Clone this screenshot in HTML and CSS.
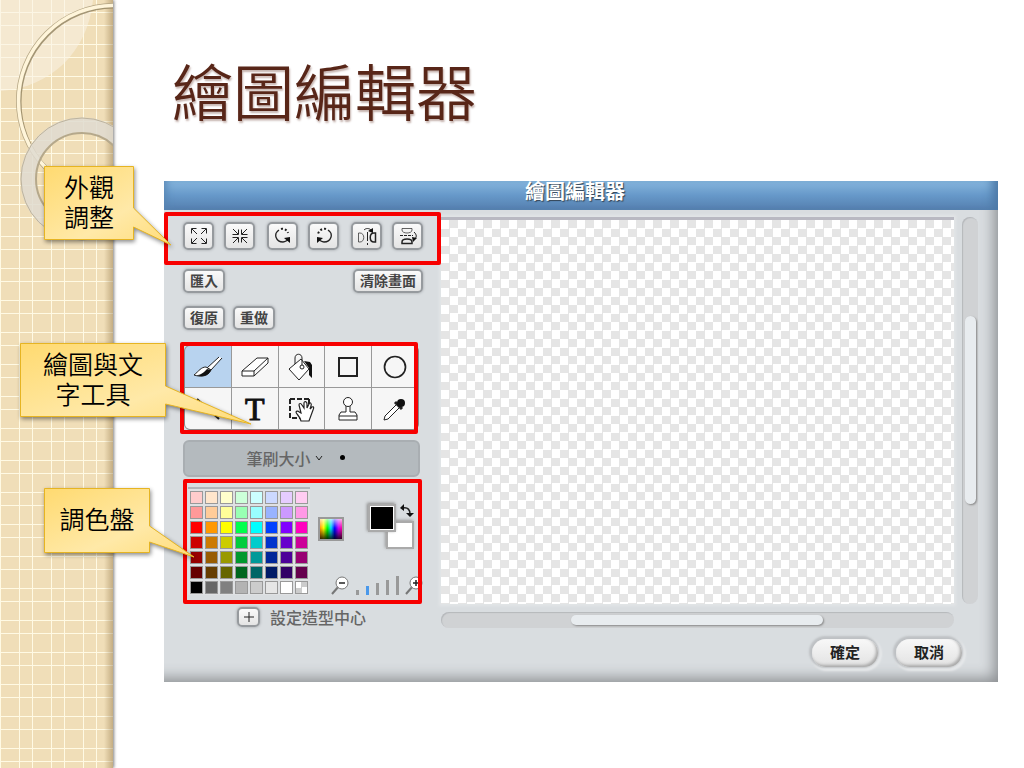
FILE: index.html
```html
<!DOCTYPE html>
<html lang="zh-Hant">
<head>
    <meta charset="UTF-8">
    <meta name="viewport" content="width=device-width, initial-scale=1.0">
    <title>繪圖編輯器</title>
    <link rel="stylesheet" href="styles.css">
</head>
<body>
    <div class="slide">
        <div class="band">
            <svg width="113" height="768" viewBox="0 0 113 768" aria-hidden="true">
                <path d="M0 0H93C88 52 50 88 0 91Z" fill="#faf3e6" fill-opacity="0.55" stroke="none"/>
                <circle cx="114" cy="101" r="95" stroke="#8f7f5c" stroke-opacity="0.8" stroke-width="3" transform="translate(1 1)"/>
                <circle cx="114" cy="101" r="97" stroke="#b3a482" stroke-width="2"/>
                <circle cx="114" cy="101" r="95.5" stroke="#fff5da" stroke-width="3.5"/>
                <circle cx="82" cy="179" r="54" stroke="#dfdbd0" stroke-opacity="0.85" stroke-width="15"/>
                <circle cx="82" cy="179" r="61" stroke="#bdb39d"/>
                <circle cx="82" cy="179" r="46" stroke="#b5a88b" stroke-width="2"/>
            </svg>
        </div>

        <main class="content">
            <h1>繪圖編輯器</h1>

            <section class="editor">
                <h2 class="editor-title">繪圖編輯器</h2>
                <div class="editor-body">
                    <div class="tools">
                        <div class="row transforms">
                            <div class="pair">
                                <button class="btn icon-btn" aria-label="放大">
                                    <svg width="18" height="18" viewBox="0 0 18 18"><path d="M7 7L2 2M1.500 6.500V1.500H6.500M11 7L16 2M11.500 1.500H16.500V6.500M7 11L2 16M1.500 11.500V16.500H6.500M11 11L16 16M16.500 11.500V16.500H11.500"/></svg>
                                </button>
                                <button class="btn icon-btn" aria-label="縮小">
                                    <svg width="18" height="18" viewBox="0 0 18 18"><path d="M2 2L7 7M7.500 2.500V7.500H1.500M16 2L11 7M10.500 2.500V7.500H16.500M2 16L7 11M1.500 10.500H7.500V15.500M16 16L11 11M16.500 10.500H10.500V15.500"/></svg>
                                </button>
                            </div>
                            <div class="pair">
                                <button class="btn icon-btn" aria-label="順時針旋轉">
                                    <svg width="18" height="18" viewBox="0 0 18 18"><path d="M5 3C-1 7 2 15 9 15C11 15 12 14 14 13" stroke-width="1.3"/><path d="M7 2C10 1 13 3 14 6" stroke-width="2" stroke-dasharray="2 2"/><path d="M10 11L16 10V16Z" class="solid"/></svg>
                                </button>
                                <button class="btn icon-btn" aria-label="逆時針旋轉">
                                    <svg width="18" height="18" viewBox="0 0 18 18"><path d="M13 3C19 7 16 15 9 15C7 15 6 14 4 13" stroke-width="1.3"/><path d="M11 2C8 1 4 3 3 7" stroke-width="2" stroke-dasharray="2 2"/><path d="M8 11L2 10V16Z" class="solid"/></svg>
                                </button>
                            </div>
                            <div class="pair">
                                <button class="btn icon-btn" aria-label="水平翻轉">
                                    <svg width="20" height="18" viewBox="0 0 20 18"><path d="M1.500 6H3C8 6 8 15 3 15H1.500Z" opacity=".7"/><path d="M18.500 6H17C12 6 12 15 17 15H18.500Z" stroke-width="1.500"/><path d="M10.500 5V18" stroke-dasharray="9 2"/><path d="M7 3C9 1 12 1 14 3"/><path d="M11 4L16 1V6Z" class="solid"/></svg>
                                </button>
                                <button class="btn icon-btn" aria-label="垂直翻轉">
                                    <svg width="20" height="20" viewBox="0 0 20 20"><path d="M4 2.500H14V4C14 8 4 8 4 4Z" opacity=".7"/><path d="M4 17.500H14V16C14 12 4 12 4 16Z" stroke-width="1.500"/><path d="M2 9.500H15" stroke-dasharray="3 1"/><path d="M16 6C19 9 19 11 16 14"/><path d="M14 11L19 12L15 16Z" class="solid"/></svg>
                                </button>
                            </div>
                        </div>
                        <div class="row import-row">
                            <button class="btn">匯入</button>
                            <button class="btn">清除畫面</button>
                        </div>
                        <div class="row undo-row">
                            <button class="btn">復原</button>
                            <button class="btn">重做</button>
                        </div>

                        <div class="tool-grid">
                            <button class="tool active" aria-label="筆刷">
                                <svg width="30" height="24" viewBox="0 0 30 24"><path d="M26 2L14 13L18 15L29 3" fill="#fff"/><path d="M13 12C8 12 6 16 1 20C7 22 15 22 18 15Z" fill="#fff"/><path d="M3 20C8 20 10 18 14 14L18 15C15 22 8 22 3 20Z" class="solid"/></svg>
                            </button>
                            <button class="tool" aria-label="橡皮擦">
                                <svg width="30" height="24" viewBox="0 0 30 24"><path d="M2 16L17 3H28L14 16ZM2 16V21H14V16M14 21L28 8V3" fill="#fff"/></svg>
                            </button>
                            <button class="tool" aria-label="填滿">
                                <svg width="28" height="30" viewBox="0 0 28 30"><path d="M17 9L23 10L25 13V26L22 23V16Z" class="solid"/><path d="M2 17L14 7L22 17L12 28Z" fill="#fff"/><path d="M8 12V6C8 1 15 1 15 6V14"/><circle cx="15" cy="15" r="2" fill="#fff"/></svg>
                            </button>
                            <button class="tool" aria-label="矩形">
                                <svg width="24" height="24" viewBox="0 0 24 24"><rect x="3" y="3" width="18" height="18" stroke-width="2"/></svg>
                            </button>
                            <button class="tool" aria-label="橢圓">
                                <svg width="26" height="26" viewBox="0 0 26 26"><circle cx="13" cy="13" r="10.5" stroke-width="1.7"/></svg>
                            </button>
                            <button class="tool" aria-label="直線">
                                <svg width="24" height="24" viewBox="0 0 24 24"><path d="M1 2L23 22" stroke-width="2"/></svg>
                            </button>
                            <button class="tool" aria-label="文字"><span class="text-tool">T</span></button>
                            <button class="tool" aria-label="選取">
                                <svg width="28" height="26" viewBox="0 0 28 26"><path d="M3 3H22M3 3V22H20M22 3V22" stroke-width="2" stroke-dasharray="5 2"/><path d="M14 25C13 20 9 18 9 16C10 14 12 16 14 17L12 9C12 7 14 7 15 9L17 12L17 7C17 5 20 5 20 8V12L22 8C23 6 25 7 24 10L23 13L25 11C27 10 27 12 26 14L22 25Z" fill="#fff" stroke-width="1.2"/></svg>
                            </button>
                            <button class="tool" aria-label="印章">
                                <svg width="22" height="26" viewBox="0 0 22 26"><path d="M9 9V16H4L2 19V24H20V19L18 16H13V9M2 20H20" fill="#fff"/><circle cx="11" cy="6" r="4.5" fill="#fff"/></svg>
                            </button>
                            <button class="tool" aria-label="滴管">
                                <svg width="26" height="26" viewBox="0 0 26 26"><path d="M14 9L3 20L2 24L6 23L17 12" fill="#fff"/><path d="M13 6L20 13" stroke-width="3"/><circle cx="19" cy="7" r="4" class="solid"/></svg>
                            </button>
                        </div>

                        <button class="brush-size"><span>筆刷大小</span><svg width="8" height="6" viewBox="0 0 8 6"><path d="M1 1L4 5L7 1"/></svg><span class="brush-dot"></span></button>

                        <div class="colors">
                            <div class="palette" id="palette"></div>
                            <button class="rainbow" aria-label="光譜"></button>
                            <div class="color-side">
                                <div class="current">
                                    <button class="back-color" aria-label="背景色"></button>
                                    <button class="fore-color" aria-label="前景色"></button>
                                    <svg width="14" height="14" viewBox="0 0 14 14"><path d="M3 4C8 3 10 6 10 10" stroke-width="1.5"/><path d="M0 4L4 0V7ZM6 9H14L10 13Z" class="solid"/></svg>
                                </div>
                                <div class="zoom">
                                    <svg width="19" height="19" viewBox="0 0 19 19"><path d="M1 18L8 10" stroke="#777" stroke-width="2"/><circle cx="11" cy="7" r="6" fill="#fff" stroke="#777"/><path d="M8 7H14" stroke-width="1.5"/></svg>
                                    <span class="bar b1"></span>
                                    <span class="bar b2"></span>
                                    <span class="bar b3"></span>
                                    <span class="bar b4"></span>
                                    <span class="bar b5"></span>
                                    <svg width="19" height="19" viewBox="0 0 19 19"><path d="M1 18L8 10" stroke="#777" stroke-width="2"/><circle cx="11" cy="7" r="6" fill="#fff" stroke="#777"/><path d="M8 7H14M11 4V10" stroke-width="1.5"/></svg>
                                </div>
                            </div>
                        </div>

                        <div class="center-row">
                            <button class="btn plus-btn" id="center" aria-label="設定造型中心"><svg width="12" height="12" viewBox="0 0 12 12"><path d="M6 1V11M1 6H11"/></svg></button>
                            <label for="center">設定造型中心</label>
                        </div>
                    </div>

                    <div class="stage">
                        <div class="canvas"></div>
                        <div class="track vertical"><div class="thumb"></div></div>
                        <div class="track horizontal"><div class="thumb"></div></div>
                        <div class="actions">
                            <button class="pill">確定</button>
                            <button class="pill">取消</button>
                        </div>
                    </div>
                </div>
            </section>
        </main>

        <!-- annotations on top of the editor -->
        <div class="frame frame-transform"></div>
        <div class="frame frame-tools"></div>
        <div class="frame frame-colors"></div>

        <svg class="tails" width="260" height="600" viewBox="0 0 260 600" aria-hidden="true">
            <defs>
                <linearGradient id="gold" x1="0" y1="0" x2="1" y2="1">
                    <stop offset="0" stop-color="#ffda70"/>
                    <stop offset="0.6" stop-color="#ffe9a8"/>
                    <stop offset="1" stop-color="#ffdc78"/>
                </linearGradient>
            </defs>
            <path d="M44.5 166.5H133.5V208L171 245L133.5 227V239.5H44.5Z"/>
            <path d="M20.5 343.5H165.5V386L251 424L165.5 404V416.5H20.5Z"/>
            <path d="M44.5 488.5H149.5V526L194 557L149.5 542V552.5H44.5Z"/>
        </svg>
        <div class="callout callout-transform">外觀<br>調整</div>
        <div class="callout callout-tools">繪圖與文<br>字工具</div>
        <div class="callout callout-colors">調色盤</div>
    </div>

    <script>
        const colors = [
            "#ffcccc", "#ffe6cc", "#ffffcc", "#ccffd9", "#ccffff", "#ccd9ff", "#e6ccff", "#ffccf2",
            "#ff9999", "#ffcc99", "#ffff99", "#99ffb3", "#99ffff", "#99b3ff", "#cc99ff", "#ff99e6",
            "#ff0000", "#ff9900", "#ffff00", "#00ff4d", "#00ffff", "#0040ff", "#8000ff", "#ff00bf",
            "#cc0000", "#cc7a00", "#cccc00", "#00cc3d", "#00cccc", "#0033cc", "#6600cc", "#cc0099",
            "#990000", "#995c00", "#999900", "#00992e", "#009999", "#002699", "#4d0099", "#990073",
            "#660000", "#663d00", "#666600", "#00661f", "#006666", "#001a66", "#330066", "#66004d",
            "#000000", "#666666", "#808080", "#b3b3b3", "#cccccc", "#e6e6e6", "#ffffff", "clear"
        ];

        colors.forEach(color => {
            const swatch = document.createElement("button");
            swatch.className = "swatch";
            swatch.setAttribute("aria-label", color);
            if (color === "clear") {
                swatch.classList.add("clear");
            } else {
                swatch.style.backgroundColor = color;
            }
            document.getElementById("palette").appendChild(swatch);
        });
    </script>
</body>
</html>
```
FILE: styles.css
```css
* {
    box-sizing: border-box;
}
body {
    margin: 0;
    font-family: "Noto Sans CJK TC", sans-serif;
    background-color: white;
}
button {
    font-family: inherit;
    padding: 0;
    cursor: pointer;
}
svg {
    display: block;
    fill: none;
    stroke: #222;
}
.solid {
    fill: #111;
    stroke: none;
}
.slide {
    position: relative;
    display: flex;
    min-height: 100vh;
    overflow: hidden;
}
.band {
    flex: 0 0 113px;
    overflow: hidden;
    background:
        linear-gradient(90deg, transparent 92%, rgba(130, 100, 50, 0.4)),
        linear-gradient(90deg, #fffae4 1px, transparent 1px 19px, #fffae4 19px 20px, transparent 20px) 0 0 / 32px 32px,
        linear-gradient(transparent 12px, #fffae4 12px 13px, transparent 13px 25px, #fffae4 25px 26px, transparent 26px) 0 0 / 32px 32px,
        #f0deb8;
    box-shadow: 1px 0 3px rgba(0, 0, 0, 0.5);
}
.content {
    flex: 1;
    padding: 46px 26px 0 51px;
}
h1 {
    margin: 0 0 47px;
    padding-left: 8px;
    font-size: 61px;
    font-weight: 350;
    line-height: 88px;
    color: #582618;
    text-shadow: 1px 2px 2px rgba(88, 38, 24, 0.35);
}

/* editor window */
.editor {
    background-color: #d9dde0;
    box-shadow: inset -12px -12px 14px -8px #8e9194;
}
.editor-title {
    margin: 0;
    height: 29px;
    padding-right: 12px;
    font-size: 20px;
    line-height: 20px;
    text-align: center;
    color: white;
    background: linear-gradient(#86b6dd, #6698c9 50%, #557fae);
    text-shadow: 1px 1px 1px #345;
    box-shadow: inset 8px 0 8px -6px #5784b3, inset -12px 0 10px -6px #4d7aa8;
}
.editor-body {
    display: flex;
    gap: 18px;
    padding: 7px 20px 15px 19px;
}
.tools {
    flex: 0 0 240px;
    min-width: 0;
    padding-top: 5px;
}
.row {
    display: flex;
    justify-content: space-between;
}
.pair {
    display: flex;
    gap: 10px;
}
.btn {
    height: 24px;
    padding: 0 5px 2px;
    font-size: 14px;
    font-weight: 700;
    line-height: 18px;
    color: #444;
    background: linear-gradient(#fafafa, #e4e4e4);
    border: 2px solid #969a9e;
    border-radius: 5px;
    box-shadow: 0 0 3px #9b9fa3;
}
.icon-btn {
    display: grid;
    place-items: center;
    width: 31px;
    height: 28px;
    padding: 0;
}
.import-row {
    margin-top: 19px;
}
.undo-row {
    justify-content: flex-start;
    gap: 8px;
    margin-top: 13px;
}
.tool-grid {
    display: grid;
    grid-template-columns: repeat(5, 1fr);
    gap: 1px;
    margin: 15px 4px 0 1px;
    border: 1px solid #888;
    border-radius: 6px;
    overflow: hidden;
    background-color: #999;
}
.tool {
    display: grid;
    place-items: center;
    height: 41px;
    border: 0;
    background-color: #f6f6f6;
}
.tool.active {
    background-color: #b8d3ef;
}
.text-tool {
    font-family: "Liberation Serif", serif;
    font-size: 32px;
    font-weight: 400;
    line-height: 36px;
    color: #111;
    -webkit-text-stroke: 1px #111;
}
.brush-size {
    display: flex;
    align-items: center;
    justify-content: center;
    width: 237px;
    height: 37px;
    margin: 10px 0 0;
    padding: 0 12px 2px 0;
    font-size: 16px;
    font-weight: 500;
    color: #666;
    background-color: #b4babe;
    border: 2px solid #a9aeb2;
    border-radius: 6px;
}
.brush-size svg {
    margin-left: 4px;
}
.brush-dot {
    width: 5px;
    height: 5px;
    margin-left: 17px;
    border-radius: 50%;
    background-color: black;
}
.colors {
    display: flex;
    align-items: flex-start;
    margin-top: 10px;
    padding-left: 5px;
}
.palette {
    display: grid;
    grid-template-columns: repeat(8, 13px);
    gap: 2px;
    padding: 2px 2px 1px;
    border-top: 2px solid #b1b5b9;
    background-color: #dfe1e3;
}
.swatch {
    width: 13px;
    height: 13px;
    border: 1px solid #999;
}
.swatch.clear {
    background: conic-gradient(#ccc 25%, white 25% 50%, #ccc 50% 75%, white 75%);
}
.rainbow {
    width: 26px;
    height: 24px;
    margin: 30px 0 0 8px;
    border: 2px solid #999;
    background:
        linear-gradient(rgba(255, 255, 255, 0.7), transparent 45%, rgba(0, 0, 0, 0.8)),
        linear-gradient(90deg, #ff9000, #ffff00, #00ff00, #00e0ff, #0000ff, #c000ff, #ff00a0);
}
.color-side {
    flex: 1;
    min-width: 0;
    margin-top: 17px;
}
.current {
    position: relative;
    width: 48px;
    height: 45px;
    margin-left: 24px;
}
.fore-color,
.back-color {
    position: absolute;
    width: 28px;
    height: 28px;
    border: 2px solid #aaa;
}
.fore-color {
    top: 0;
    left: 0;
    background-color: black;
    box-shadow: inset 0 0 0 1px white, -1px -1px 3px #888;
}
.back-color {
    right: 2px;
    bottom: 0;
    background-color: white;
    box-shadow: -1px -1px 3px #999;
}
.current svg {
    position: absolute;
    top: 0;
    right: 2px;
}
.zoom {
    display: flex;
    align-items: flex-end;
    gap: 6px;
    width: 94px;
    margin: 27px 0 0 -13px;
}
.bar {
    flex: 0 0 3px;
    background-color: #999;
}
.bar + .bar {
    margin-left: 1px;
}
.b1 {
    height: 5px;
}
.b2 {
    height: 9px;
    background-color: #4a98ea;
}
.b3 {
    height: 12px;
}
.b4 {
    height: 15px;
}
.b5 {
    height: 19px;
}
.center-row {
    display: flex;
    align-items: center;
    gap: 10px;
    margin: 12px 0 0 54px;
    font-size: 16px;
    font-weight: 500;
    line-height: 20px;
    color: #666;
}
.plus-btn {
    display: grid;
    place-items: center;
    width: 23px;
    height: 20px;
    padding: 0;
}

/* drawing area */
.stage {
    flex: 1;
    display: grid;
    grid-template-columns: 1fr 16px;
    grid-template-rows: 387px 16px auto;
    gap: 8px;
}
.canvas {
    border-top: 3px solid #b9b9c2;
    background: conic-gradient(#e5e5e5 25%, white 25% 50%, #e5e5e5 50% 75%, white 75%) 0 0 / 17px 17px;
    box-shadow: 0 0 3px 2px #e2e5e7;
}
.track {
    display: flex;
    background-color: #d0d2d4;
    border-radius: 8px;
    box-shadow: inset 1px 1px 1px #b5b8bb;
}
.vertical {
    flex-direction: column;
    padding: 99px 2px 0 3px;
}
.horizontal {
    padding: 3px 0 3px 130px;
}
.thumb {
    border-radius: 6px;
    background-color: #e8ecef;
    box-shadow: 1px 1px 2px #888;
}
.vertical .thumb {
    height: 188px;
}
.horizontal .thumb {
    width: 252px;
}
.actions {
    grid-column: 1 / -1;
    display: flex;
    justify-content: flex-end;
    gap: 18px;
    padding: 3px 16px 0 0;
}
.pill {
    width: 66px;
    height: 28px;
    padding-bottom: 2px;
    font-size: 15px;
    font-weight: 700;
    line-height: 20px;
    color: #222;
    border: 0;
    border-radius: 14px;
    background: linear-gradient(#f8f8f8, #e2e2e2);
    box-shadow: inset -2px -2px 3px #aaa, -1px -1px 2px 2px #bec1c4, 1px 1px 2px 3px #e6e8ea;
}

/* red frames and callouts */
.frame {
    position: absolute;
    border: 4px solid #f70000;
    border-radius: 2px;
}
.frame-transform {
    top: 212px;
    left: 164px;
    width: 277px;
    height: 53px;
}
.frame-tools {
    top: 342px;
    left: 180px;
    width: 238px;
    height: 92px;
}
.frame-colors {
    top: 479px;
    left: 183px;
    width: 239px;
    height: 125px;
}
.tails {
    position: absolute;
    top: 0;
    left: 0;
    fill: url(#gold);
    stroke: #e6b422;
    filter: drop-shadow(1px 2px 2px rgba(0, 0, 0, 0.45));
}
.callout {
    position: absolute;
    display: flex;
    align-items: center;
    justify-content: center;
    padding-bottom: 4px;
    text-align: center;
    font-size: 25px;
    font-weight: 350;
    line-height: 30px;
    color: black;
}
.callout-transform {
    top: 166px;
    left: 44px;
    width: 90px;
    height: 73px;
}
.callout-tools {
    top: 343px;
    left: 20px;
    width: 146px;
    height: 73px;
}
.callout-colors {
    top: 488px;
    left: 44px;
    width: 106px;
    height: 64px;
}
```
